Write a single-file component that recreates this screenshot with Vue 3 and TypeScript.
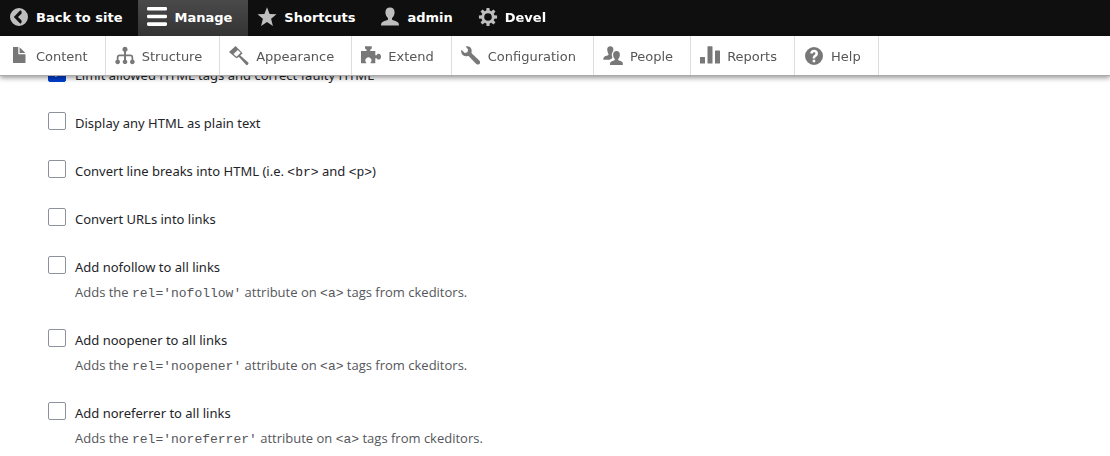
<script setup lang="ts">
import { ref } from 'vue'

interface Shape {
  d: string
  evenodd?: boolean
}

interface NavItem {
  label: string
  icon: Shape
  active?: boolean
}

interface Part {
  text: string
  code?: boolean
}

interface Filter {
  id: string
  checked: boolean
  label: Part[]
  description?: Part[]
}

const gearTeeth = (() => {
  const points: string[] = []
  const teeth = 8
  for (let i = 0; i < teeth; i++) {
    const mid = (i * 2 * Math.PI) / teeth - Math.PI / 2
    const corners: [number, number][] = [
      [6.6, -0.26],
      [9.2, -0.16],
      [9.2, 0.16],
      [6.6, 0.26],
    ]
    for (const [r, a] of corners) {
      points.push(`${(10 + r * Math.cos(mid + a)).toFixed(2)} ${(10 + r * Math.sin(mid + a)).toFixed(2)}`)
    }
  }
  return `M${points.join('L')}Z`
})()

const tabs: NavItem[] = [
  {
    label: 'Back to site',
    icon: {
      evenodd: true,
      d: 'M10 1a9 9 0 1 0 0 18a9 9 0 0 0 0-18zM12.6 6.4L9 10l3.6 3.6v1.9l-1.3 1.3L4.8 10l6.5-6.800l1.300 1.300z',
    },
  },
  {
    label: 'Manage',
    active: true,
    icon: {
      d: 'M1.3 0h17.4a1.3 1.3 0 0 1 1.3 1.3v1a1.3 1.3 0 0 1-1.3 1.3H1.3A1.3 1.3 0 0 1 0 2.3v-1A1.3 1.3 0 0 1 1.3 0zM1.3 7.7h17.4A1.3 1.3 0 0 1 20 9v1a1.3 1.3 0 0 1-1.3 1.3H1.3A1.3 1.3 0 0 1 0 10V9a1.3 1.3 0 0 1 1.3-1.3zM1.3 15.3h17.4a1.3 1.3 0 0 1 1.3 1.3v1a1.3 1.3 0 0 1-1.3 1.3H1.3A1.3 1.3 0 0 1 0 17.6v-1a1.3 1.3 0 0 1 1.3-1.3z',
    },
  },
  {
    label: 'Shortcuts',
    icon: { d: 'M10 .3l2.6 6.6l6.9.4l-5.4 4.5l1.8 7.3L10 15.1l-5.9 4l1.8-7.3L.5 7.3l6.9-.4z' },
  },
  {
    label: 'admin',
    icon: {
      d: 'M10 .5c3 0 4.7 2 4.6 4.9c-.1 2.2-1 4.2-2.3 5.4c-.5.5-.5 1.9.2 2.3c1.7.9 4.5 1.3 5.6 2.3c.6.6.8 1.7.9 3.1H1c.1-1.4.3-2.5.9-3.1c1.1-1 3.9-1.4 5.6-2.3c.7-.4.7-1.8.2-2.3C6.4 9.6 5.5 7.6 5.4 5.4C5.3 2.5 7 .5 10 .5z',
    },
  },
  {
    label: 'Devel',
    icon: {
      evenodd: true,
      d: gearTeeth + 'M10 6.2a3.8 3.8 0 1 0 0 7.6a3.8 3.8 0 0 0 0-7.6z',
    },
  },
]

const trayLinks: NavItem[] = [
  {
    label: 'Content',
    icon: { d: 'M4 1h5.3v7.2h7.2V17H4zM10.6 1.2l5.8 5.7h-5.8z' },
  },
  {
    label: 'Structure',
    icon: {
      d: 'M10 .8a2.6 2.6 0 0 1 1 5v2.7h4.3c2.1 0 2.9 1 2.9 2.9v2.4a2.3 2.3 0 1 1-1.7 0v-2.2c0-1-.4-1.4-1.4-1.4H11v3.5a2.3 2.3 0 1 1-2 0v-3.5H4.9c-1 0-1.4.4-1.4 1.4v2.2a2.3 2.3 0 1 1-1.7 0v-2.4c0-1.900.8-2.900 2.900-2.900H9V5.800a2.600 2.600 0 0 1 1-5z',
    },
  },
  {
    label: 'Appearance',
    icon: {
      evenodd: true,
      d: 'M6.600 0l7 7.200l-2.300 2.400l7.700 6.700a1.500 1.500 0 0 1-2.200 2.100L10 11l-2.700 1.200L0 6.100zM8.800 4L4.500 8.100l3 2.600l4.200-4z',
    },
  },
  {
    label: 'Extend',
    icon: {
      d: 'M0 5h5.6V3.7L4 2.5V.3h6.8v2.2L9.2 3.7V5h5.1v4.2h1.4c.4-1 1-1.4 1.9-1.4c1.5 0 2.4 1.3 2.4 2.9s-.9 2.9-2.4 2.9c-.9 0-1.5-.4-1.9-1.4h-1.4v5.1H9.600v-.8a3 3 0 1 0-4.400 0v.8H0z',
    },
  },
  {
    label: 'Configuration',
    icon: {
      d: 'M4.8.6c2.5-.8 5 .5 5.7 2.8c.3 1 .2 1.9 0 2.9c-.1.5 0 .8.4 1.1l7.6 7.3c1.3 1.3.4 3.9-1.8 3.9c-.7 0-1.2-.3-1.7-.8l-7.2-7.5c-.3-.3-.6-.4-1-.3C3.7 10.7 1 9.4.4 6.7C.1 5.7.2 4.7.5 3.8l3.2 3.1l2.7-.7l.7-2.6z',
    },
  },
  {
    label: 'People',
    icon: {
      d: 'M7.3.3c2 0 3.2 1.3 3.1 3.2c-.1 1.1-.4 2-.9 2.7c-.8 1-.9 2.4-.5 3.7c.3 1.1.6 1.9-.1 2.5c-.7.5-1.7.7-2.2 1.4H.3c.1-1.6.4-2.7 1.4-3.2c1-.6 2.9-.8 3.6-1.5c.4-.4.3-1.2-.1-1.7c-.5-.8-.9-2-1-3.6C4.1 1.7 5.3.3 7.3.3zM13.5 5c2.2 0 3.5 1.5 3.4 3.7c-.1 1.6-.6 3-1.5 4c-.4.5-.3 1.3.2 1.6c1.1.7 2.9.8 3.7 1.7c.5.6.6 1.7.6 3H7c0-1.3.2-2.4.7-3c.7-.9 2.6-1 3.7-1.7c.5-.3.6-1.1.2-1.6c-.9-1-1.4-2.4-1.5-4C10 6.5 11.3 5 13.5 5z',
    },
  },
  {
    label: 'Reports',
    icon: {
      d: 'M.5 11h4a.5.5 0 0 1 .5.5V17a.5.5 0 0 1-.5.5h-4A.5.5 0 0 1 0 17v-5.5A.5.5 0 0 1 .5 11zM8 .3h4a.5.5 0 0 1 .5.5V17a.5.5 0 0 1-.5.5H8a.5.5 0 0 1-.5-.5V.8A.5.5 0 0 1 8 .3zM15.5 4.5h4a.5.5 0 0 1 .5.5v12a.5.5 0 0 1-.5.5h-4a.5.5 0 0 1-.5-.5V5a.5.5 0 0 1 .5-.5z',
    },
  },
  {
    label: 'Help',
    icon: {
      evenodd: true,
      d: 'M10 1a9 9 0 1 0 0 18a9 9 0 0 0 0-18zM6.2 7.6c0-2.2 1.7-3.8 3.9-3.8s3.9 1.6 3.9 3.7c0 1.6-.9 2.5-1.9 3.2c-.7.5-.9.7-.9 1.4v.5H8.7v-.8c0-1.4.7-2.2 1.6-2.9c.7-.5 1.1-.8 1.1-1.4a1.3 1.3 0 0 0-2.6.1zM8.7 13.7h2.5v2.5H8.7z',
    },
  },
]

const attribute = (value: string): Part[] => [
  { text: 'Adds the ' },
  { text: `rel='${value}'`, code: true },
  { text: ' attribute on ' },
  { text: '<a>', code: true },
  { text: ' tags from ckeditors.' },
]

const filters = ref<Filter[]>([
  { id: 'filter-html', checked: true, label: [{ text: 'Limit allowed HTML tags and correct faulty HTML' }] },
  { id: 'filter-escape', checked: false, label: [{ text: 'Display any HTML as plain text' }] },
  {
    id: 'filter-autop',
    checked: false,
    label: [
      { text: 'Convert line breaks into HTML (i.e. ' },
      { text: '<br>', code: true },
      { text: ' and ' },
      { text: '<p>', code: true },
      { text: ')' },
    ],
  },
  { id: 'filter-url', checked: false, label: [{ text: 'Convert URLs into links' }] },
  {
    id: 'filter-nofollow',
    checked: false,
    label: [{ text: 'Add nofollow to all links' }],
    description: attribute('nofollow'),
  },
  {
    id: 'filter-noopener',
    checked: false,
    label: [{ text: 'Add noopener to all links' }],
    description: attribute('noopener'),
  },
  {
    id: 'filter-noreferrer',
    checked: false,
    label: [{ text: 'Add noreferrer to all links' }],
    description: attribute('noreferrer'),
  },
])
</script>

<template>
  <header class="toolbar">
    <nav class="bar">
      <a v-for="tab in tabs" :key="tab.label" href="#" class="tab" :class="{ active: tab.active }">
        <svg class="icon" viewBox="0 0 20 20" aria-hidden="true">
          <path :d="tab.icon.d" :fill-rule="tab.icon.evenodd ? 'evenodd' : 'nonzero'" />
        </svg>
        <span class="caption">{{ tab.label }}</span>
      </a>
    </nav>
    <nav class="tray">
      <a v-for="link in trayLinks" :key="link.label" href="#" class="tray-link">
        <svg class="icon" viewBox="0 0 20 20" aria-hidden="true">
          <path :d="link.icon.d" :fill-rule="link.icon.evenodd ? 'evenodd' : 'nonzero'" />
        </svg>
        <span class="caption">{{ link.label }}</span>
      </a>
    </nav>
  </header>

  <main class="filters">
    <div v-for="filter in filters" :key="filter.id" class="filter">
      <input
        :id="filter.id"
        v-model="filter.checked"
        type="checkbox"
        class="checkbox"
        :aria-describedby="filter.description ? `${filter.id}-description` : undefined"
      />
      <div class="text">
        <label :for="filter.id" class="label"><template v-for="(part, i) in filter.label" :key="i"><code v-if="part.code">{{ part.text }}</code><template v-else>{{ part.text }}</template></template></label>
        <div v-if="filter.description" :id="`${filter.id}-description`" class="description"><template v-for="(part, i) in filter.description" :key="i"><code v-if="part.code">{{ part.text }}</code><template v-else>{{ part.text }}</template></template></div>
      </div>
    </div>
  </main>
</template>

<style>
body {
  margin: 0;
  background: #fff;
}
</style>

<style scoped>
.toolbar {
  position: fixed;
  top: 0;
  left: 0;
  right: 0;
  z-index: 10;
  font-family: Verdana, "DejaVu Sans", sans-serif;
  font-size: 13px;
  line-height: 16px;
}

.bar {
  display: flex;
  height: 36px;
  background: #0f0f0f;
}

.tab,
.tray-link {
  display: flex;
  align-items: center;
  gap: 7px;
  padding: 0 17px 0 9px;
  text-decoration: none;
  white-space: nowrap;
}

.tab {
  padding: 0 16px 2px 9px;
  color: #fff;
  font-weight: bold;
}

.tab.active {
  background: linear-gradient(#4a4a4a, #333);
}

.caption {
  padding-top: 2px;
}

.icon {
  flex: none;
  width: 20px;
  height: 20px;
  fill: #bebebe;
}

.active .icon {
  fill: #fff;
}

.tray {
  display: flex;
  height: 39px;
  background: #fff;
  border-bottom: 1px solid #aaa;
  box-shadow: 0 2px 5px rgba(0, 0, 0, 0.4);
}

.tray-link {
  padding-top: 1px;
  color: #565656;
  border-right: 1px solid #ddd;
}

.tray-link .icon {
  fill: #787878;
}

.filters {
  display: flex;
  flex-direction: column;
  gap: 24px;
  padding: 63px 48px 0;
}

.filter {
  display: flex;
  align-items: flex-start;
  gap: 9px;
}

.checkbox {
  flex: none;
  display: grid;
  place-items: center;
  box-sizing: border-box;
  width: 18px;
  height: 18px;
  margin: 1px 0 0;
  appearance: none;
  background: #fff;
  border: 1px solid #8e929c;
  border-radius: 2px;
}

.checkbox:checked {
  background: #003ecc;
  border-color: #003ecc;
}

.checkbox:checked::before {
  content: "";
  width: 4px;
  height: 7px;
  margin-bottom: 3px;
  border: solid #fff;
  border-width: 0 2px 2px 0;
  transform: rotate(45deg);
}

.label {
  display: block;
  color: #232429;
  font-family: "Segoe UI", "Noto Sans", sans-serif;
  font-size: 13px;
  line-height: 24px;
}

.description {
  padding: 2px 0 1px;
  color: #55565b;
  font-family: "Segoe UI", "Open Sans", sans-serif;
  font-size: 13px;
  line-height: 22px;
}

code {
  font-family: "Courier New", "Liberation Mono", monospace;
  font-size: 13px;
  line-height: 16px;
}
</style>
